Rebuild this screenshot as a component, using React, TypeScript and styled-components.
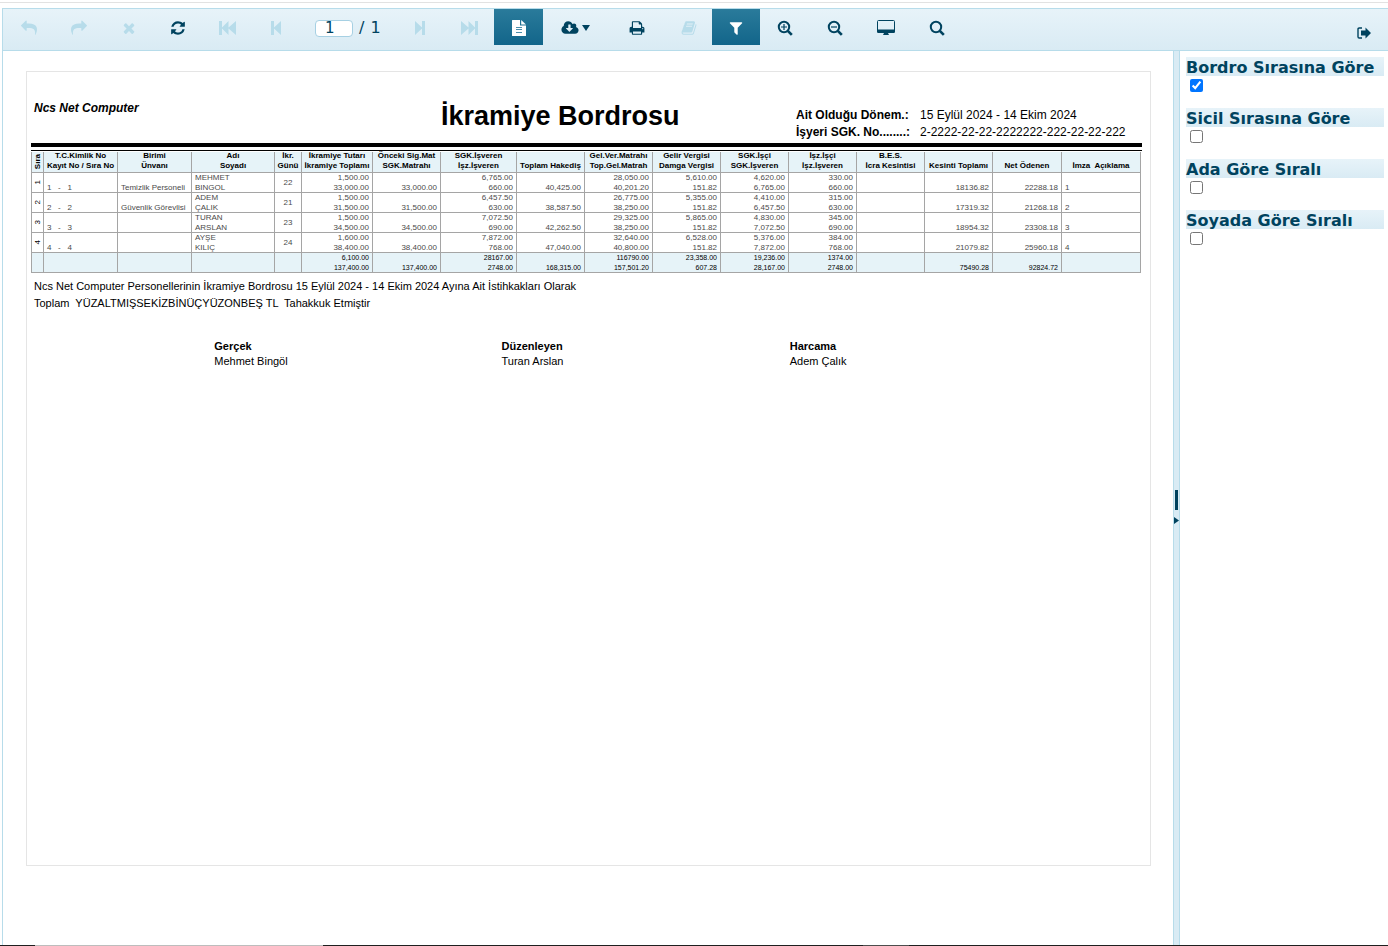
import React from "react";
import styled, { createGlobalStyle } from "styled-components";

const ink = "#00435f";
const edge = "#b7dcea";
const tint = "#e6f3f8";

const GlobalStyle = createGlobalStyle`
  *, *::before, *::after { box-sizing: border-box; }
  body {
    margin: 0;
    background: #fff;
    font-family: "Liberation Sans", Arial, sans-serif;
    color: #000;
  }
`;

const Shell = styled.div`
  display: flex;
  flex-direction: column;
  min-height: 100vh;
  padding-top: 2px;
`;

const TopRule = styled.div`
  height: 1px;
  margin-bottom: 5px;
  background: #e2e2e2;
`;

const Viewer = styled.div`
  flex: 1;
  display: flex;
  flex-direction: column;
  margin-left: 2px;
  border-top: 1px solid ${edge};
  border-left: 1px solid ${edge};
`;

const Toolbar = styled.header`
  display: flex;
  align-items: flex-start;
  height: 42px;
  padding: 0 0 0 1px;
  border-bottom: 1px solid ${edge};
  background: linear-gradient(#e7f3f9, #d9ebf4);
`;

const ToolButton = styled.button<{ $width: number; $active?: boolean }>`
  display: flex;
  align-items: center;
  justify-content: center;
  gap: 3px;
  flex: none;
  width: ${(p) => p.$width}px;
  height: 36px;
  padding: 0;
  border: 0;
  color: ${(p) => (p.$active ? "#fff" : ink)};
  background: ${(p) => (p.$active ? "linear-gradient(#2a7b9b, #12658a)" : "none")};
  &:disabled { color: ${edge}; }
  svg { display: block; margin-top: 2px; }
`;

const PageBox = styled.label`
  display: flex;
  align-items: center;
  flex: none;
  width: 96px;
  height: 38px;
  padding-left: 15px;
  gap: 6px;
  font: 16px/20px "DejaVu Sans", Verdana, sans-serif;
  color: ${ink};
`;

const PageInput = styled.input`
  width: 38px;
  height: 17px;
  padding: 0 0 0 9px;
  border: 1px solid #a6d0e3;
  border-radius: 4px;
  background: #fff;
  font: inherit;
  font-size: 15px;
  line-height: 15px;
  color: ${ink};
`;

const ToolbarEnd = styled.div`
  margin-left: auto;
  padding-top: 5px;
`;

const Body = styled.div`
  flex: 1;
  display: flex;
`;

const PageArea = styled.main`
  flex: 1;
  min-width: 0;
  padding: 20px 22px 20px 23px;
`;

const Sheet = styled.article`
  aspect-ratio: 1125 / 795;
  padding: 0 8px 0 4px;
  border: 1px solid #e5e5e5;
`;

const SheetHead = styled.div`
  display: grid;
  grid-template-columns: 410fr 355fr 346fr;
  height: 71px;
`;

const Company = styled.div`
  padding: 29px 0 0 3px;
  font: italic bold 12px/14px "Liberation Sans", Arial, sans-serif;
`;

const Title = styled.h1`
  margin: 0;
  padding-top: 28px;
  font-size: 27px;
  line-height: 32px;
  white-space: nowrap;
`;

const Facts = styled.dl`
  display: grid;
  grid-template-columns: 124px 1fr;
  align-content: start;
  margin: 0;
  padding-top: 35px;
  font-size: 12px;
  line-height: 17px;
  white-space: nowrap;
  dt { font-weight: bold; }
  dd { margin: 0; }
`;

const DoubleRule = styled.div`
  height: 8px;
  margin-bottom: 1px;
  border-top: 4px solid #000;
  border-bottom: 1px solid #000;
`;

const Payroll = styled.table`
  width: calc(100% - 1px);
  table-layout: fixed;
  border-collapse: separate;
  border-spacing: 0;
  border-left: 1px solid #a5a5a5;
  font-size: 8px;
  line-height: 10px;
  white-space: pre;
  thead, tfoot { background: ${tint}; }
  tfoot { font-size: 7px; }
  tbody { color: #4a4a4a; }
`;

const cell = `
  padding: 0 3px;
  border-right: 1px solid #a5a5a5;
  border-bottom: 1px solid #a5a5a5;
  vertical-align: top;
`;

const HeadCell = styled.th`
  ${cell}
  padding: 0;
`;

const Cell = styled.td<{ $align: Align }>`
  ${cell}
  text-align: ${(p) => p.$align};
`;

const Lines = styled.div<{ $middle?: boolean; $head?: boolean }>`
  display: flex;
  flex-direction: column;
  justify-content: ${(p) => (p.$middle ? "center" : "flex-end")};
  height: ${(p) => (p.$head ? 19 : 20)}px;
  margin-bottom: ${(p) => (p.$head ? 0 : -1)}px;
`;

const Upright = styled.div<{ $head?: boolean }>`
  display: flex;
  align-items: center;
  justify-content: center;
  height: ${(p) => (p.$head ? 20 : 19)}px;
  margin: 0 -3px;
  color: #000;
  span { writing-mode: vertical-rl; transform: rotate(180deg); }
`;

const Note = styled.p`
  margin: 5px 0 27px;
  padding-left: 3px;
  font-size: 11px;
  line-height: 17px;
  white-space: pre;
`;

const Signatures = styled.div`
  display: grid;
  grid-template-columns: 287fr 288fr 352fr;
  padding-left: 16.5%;
  font-size: 11px;
  line-height: 15px;
  strong, span { display: block; }
`;

const Splitter = styled.div`
  display: flex;
  flex-direction: column;
  align-items: center;
  justify-content: center;
  gap: 7px;
  width: 7px;
  padding-top: 18px;
  border: solid ${edge};
  border-width: 0 1px;
  background: #d9ebf4;
`;

const Grip = styled.div`
  width: 3px;
  height: 20px;
  background: ${ink};
`;

const Collapse = styled.button`
  width: 5px;
  height: 7px;
  padding: 0;
  border: 0;
  background: none;
  color: ${ink};
  svg { display: block; }
`;

const Filters = styled.aside`
  display: flex;
  flex-direction: column;
  width: 208px;
  padding: 6px 4px 0 6px;
`;

const Filter = styled.label`
  display: block;
  height: 51px;
  font: bold 16px/21px "DejaVu Sans", Verdana, sans-serif;
  color: ${ink};
  white-space: nowrap;
`;

const FilterName = styled.span`
  display: block;
  height: 19px;
  background: linear-gradient(#e7f3f9, #d9ebf4);
`;

const Tick = styled.input`
  display: block;
  width: 13px;
  height: 13px;
  margin: 3px 4px;
`;

const BottomEdge = styled.div`
  display: flex;
  height: 1px;
  padding-left: 35px;
  overflow: hidden;
  background: #1f1f1f;
`;

const EdgeMark = styled.div<{ $width: number; $tone: string }>`
  flex: none;
  width: ${(p) => p.$width}px;
  margin-right: 540px;
  background: ${(p) => p.$tone};
`;

type Align = "left" | "center" | "right";

const paths = {
  undo: "M1792 1120q0 166-127 451-3 7-10.500 24t-13.500 30-13 22q-12 17-28 17-15 0-23.500-10t-8.500-25q0-9 2.500-26.500t2.500-23.500q5-68 5-123 0-101-17.500-181t-48.500-138.500-80-101-105.500-69.500-133-42.500-154-21.500-175.500-6h-224v256q0 26-19 45t-45 19-45-19l-512-512q-19-19-19-45t19-45l512-512q19-19 45-19t45 19 19 45v256h224q713 0 875 403 53 134 53 333z",
  close: "M1490 1322q0 40-28 68l-136 136q-28 28-68 28t-68-28l-294-294-294 294q-28 28-68 28t-68-28l-136-136q-28-28-28-68t28-68l294-294-294-294q-28-28-28-68t28-68l136-136q28-28 68-28t68 28l294 294 294-294q28-28 68-28t68 28l136 136q28 28 28 68t-28 68l-294 294 294 294q28 28 28 68z",
  refresh: "M1639 1056q0 5-1 7-64 268-268 434.500t-478 166.500q-146 0-282.500-55t-243.500-157l-129 129q-19 19-45 19t-45-19-19-45v-448q0-26 19-45t45-19h448q26 0 45 19t19 45-19 45l-137 137q71 66 161 102t187 36q134 0 250-65t186-179q11-17 53-117 8-23 30-23h192q13 0 22.500 9.500t9.500 22.500zm25-800v448q0 26-19 45t-45 19h-448q-26 0-45-19t-19-45 19-45l138-138q-148-137-349-137-134 0-250 65t-186 179q-11 17-53 117-8 23-30 23h-199q-13 0-22.500-9.500t-9.500-22.500v-7q65-268 270-434.500t480-166.500q146 0 284 55.500t245 156.500l130-129q19-19 45-19t45 19 19 45z",
  cloud: "M1280 928q0-14-9-23t-23-9h-224v-352q0-13-9.500-22.500t-22.500-9.500h-192q-13 0-22.500 9.500t-9.500 22.500v352h-224q-13 0-22.500 9.500t-9.500 22.500q0 14 9 23l352 352q9 9 23 9t23-9l351-351q10-12 10-24zm640 224q0 159-112.500 271.500t-271.500 112.500h-1088q-185 0-316.500-131.500t-131.500-316.500q0-130 70-240t188-165q-2-30-2-43 0-212 150-362t362-150q156 0 285.500 87t188.500 231q71-62 166-62 106 0 181 75t75 181q0 76-41 138 130 31 213.500 135.500t83.500 238.500z",
  print: "M448 1536h896v-256h-896v256zm0-640h896v-384h-160q-40 0-68-28t-28-68v-160h-640v640zm1152 64q0-26-19-45t-45-19-45 19-19 45 19 45 45 19 45-19 19-45zm128 0v416q0 13-9.500 22.500t-22.500 9.500h-224v160q0 40-28 68t-68 28h-960q-40 0-68-28t-28-68v-160h-224q-13 0-22.500-9.500t-9.500-22.500v-416q0-79 56.500-135.500t135.500-56.500h64v-544q0-40 28-68t68-28h672q40 0 88 20t76 48l152 152q28 28 48 76t20 88v256h64q79 0 135.500 56.500t56.500 135.500z",
  book: "M1703 478q40 57 18 129l-275 906q-19 64-76.500 107.500t-122.500 43.500h-923q-77 0-148.500-53.500t-99.500-131.500q-24-67-2-127 0-4 3-27t4-37q1-8-3-21.500t-3-19.500q2-11 8-21t16.500-23.500 16.500-23.500q23-38 45-91.500t30-91.500q3-10 .500-30t-.500-28q3-11 17-28t17-23q21-36 42-92t25-90q1-9-2.500-32t.500-28q4-13 22-30.500t22-22.500q19-26 42.500-84.500t27.500-96.500q1-8-3-25.500t-2-26.500q2-8 9-18t18-23 17-21q8-12 16.500-30.500t15-35 16-36 19.500-32 26.500-23.500 36-11.500 47.500 5.500l-1 3q38-9 51-9h761q74 0 114 56t18 130l-274 906q-36 119-71.500 153.500t-128.500 34.500h-869q-27 0-38 15-11 16-1 43 24 70 144 70h923q29 0 56-15.500t35-41.500l300-987q7-22 5-57 38 15 59 43zm-1064 2q-4 13 2 22.500t20 9.500h608q13 0 25.500-9.500t16.500-22.500l21-64q4-13-2-22.500t-20-9.500h-608q-13 0-25.500 9.500t-16.500 22.500zm-83 256q-4 13 2 22.500t20 9.500h608q13 0 25.500-9.500t16.500-22.500l21-64q4-13-2-22.500t-20-9.500h-608q-13 0-25.500 9.500t-16.500 22.500z",
  filter: "M1595 295q17 41-14 70l-493 493v742q0 42-39 59-13 5-25 5-27 0-45-19l-256-256q-19-19-19-45v-486l-493-493q-31-29-14-70 17-39 59-39h1280q42 0 59 39z",
};

function Glyph({ d, box = "0 0 1792 1792", w = 16, h = 16, flip = false }: { d: string; box?: string; w?: number; h?: number; flip?: boolean }) {
  return (
    <svg width={w} height={h} viewBox={box} fill="currentColor" aria-hidden="true">
      <path d={d} transform={flip ? "translate(1792 0) scale(-1 1)" : undefined} />
    </svg>
  );
}

const FirstIcon = () => <Glyph w={17} h={14} box="0 0 17 14" d="M0 0H3V6.500L9.500 0V6.500L17 0V14L9.500 7.500V14L3 7.500V14H0Z" />;
const PrevIcon = () => <Glyph w={10} h={14} box="0 0 10 14" d="M0 0H3V6.500L10 0V14L3 7.500V14H0Z" />;
const NextIcon = () => <Glyph w={10} h={14} box="0 0 10 14" d="M10 0H7V6.500L0 0V14L7 7.500V14H10Z" />;
const LastIcon = () => <Glyph w={17} h={14} box="0 0 17 14" d="M17 0H14V6.500L7.500 0V6.500L0 0V14L7.500 7.500V14L14 7.500V14H17Z" />;
const SheetIcon = () => (
  <svg width="14" height="16" viewBox="0 0 14 16" fill="#fff" aria-hidden="true">
    <path d="M0 0.500Q0 0 .5 0H8V5.500H14V15.500Q14 16 13.500 16H.5Q0 16 0 15.500Z" />
    <path d="M9.200 0L14 4.500H9.200Z" />
    <path d="M4 7.500H10M4 9.500H10M4 12.500H10" stroke="#4b8eab" />
  </svg>
);
const ScreenIcon = () => (
  <svg width="18" height="16" viewBox="0 0 18 16" aria-hidden="true">
    <rect x=".5" y=".5" width="17" height="11.500" rx="1" fill="none" stroke={ink} />
    <path d="M0 9.500H18V11.500Q18 13 16.800 13H11L12 15H6L7 13H1.200Q0 13 0 11.500Z" fill={ink} />
  </svg>
);
const Lens = ({ inside }: { inside?: string }) => (
  <svg width="16" height="16" viewBox="0 0 16 16" fill="none" stroke="currentColor" aria-hidden="true">
    <circle cx="7" cy="7" r="5.200" strokeWidth="2" />
    <path d="M10.800 10.800L14.800 14.800" strokeWidth="2.600" />
    {inside && <path d={inside} strokeWidth="1.200" />}
  </svg>
);
const ExitIcon = () => (
  <svg width="14" height="12" viewBox="0 0 14 12" aria-hidden="true">
    <path d="M5 1H2.200Q1 1 1 2.200V9.800Q1 11 2.200 11H5" fill="none" stroke={ink} strokeWidth="1.400" />
    <path d="M4 3.500H8.500V.5L14 6L8.500 11.500V8.500H4Z" fill={ink} />
  </svg>
);

const widths = [12, 74, 74, 83, 27, 71, 68, 76, 68, 68, 68, 68, 68, 68, 68, 69, 79];

const heads: string[][] = [
  ["T.C.Kimlik No", "Kayıt No / Sıra No"],
  ["Birimi", "Ünvanı"],
  ["Adı", "Soyadı"],
  ["İkr.", "Günü"],
  ["İkramiye Tutarı", "İkramiye Toplamı"],
  ["Önceki Sig.Mat", "SGK.Matrahı"],
  ["SGK.İşveren", "İşz.İşveren"],
  ["Toplam Hakediş"],
  ["Gel.Ver.Matrahı", "Top.Gel.Matrah"],
  ["Gelir Vergisi", "Damga Vergisi"],
  ["SGK.İşçi", "SGK.İşveren"],
  ["İşz.İşçi", "İşz.İşveren"],
  ["B.E.S.", "İcra Kesintisi"],
  ["Kesinti Toplamı"],
  ["Net Ödenen"],
  ["İmza  Açıklama"],
];

const aligns: Align[] = ["left", "left", "left", "center", "right", "right", "right", "right", "right", "right", "right", "right", "right", "right", "right", "left"];

const rows: string[][][] = [
  [["1   -   1"], ["Temizlik Personeli"], ["MEHMET", "BINGOL"], ["22"], ["1,500.00", "33,000.00"], ["33,000.00"], ["6,765.00", "660.00"], ["40,425.00"], ["28,050.00", "40,201.20"], ["5,610.00", "151.82"], ["4,620.00", "6,765.00"], ["330.00", "660.00"], [], ["18136.82"], ["22288.18"], ["1"]],
  [["2   -   2"], ["Güvenlik Görevlisi"], ["ADEM", "ÇALIK"], ["21"], ["1,500.00", "31,500.00"], ["31,500.00"], ["6,457.50", "630.00"], ["38,587.50"], ["26,775.00", "38,250.00"], ["5,355.00", "151.82"], ["4,410.00", "6,457.50"], ["315.00", "630.00"], [], ["17319.32"], ["21268.18"], ["2"]],
  [["3   -   3"], [], ["TURAN", "ARSLAN"], ["23"], ["1,500.00", "34,500.00"], ["34,500.00"], ["7,072.50", "690.00"], ["42,262.50"], ["29,325.00", "38,250.00"], ["5,865.00", "151.82"], ["4,830.00", "7,072.50"], ["345.00", "690.00"], [], ["18954.32"], ["23308.18"], ["3"]],
  [["4   -   4"], [], ["AYŞE", "KILIÇ"], ["24"], ["1,600.00", "38,400.00"], ["38,400.00"], ["7,872.00", "768.00"], ["47,040.00"], ["32,640.00", "40,800.00"], ["6,528.00", "151.82"], ["5,376.00", "7,872.00"], ["384.00", "768.00"], [], ["21079.82"], ["25960.18"], ["4"]],
];

const totals: string[][] = [[], [], [], [], ["6,100.00", "137,400.00"], ["137,400.00"], ["28167.00", "2748.00"], ["168,315.00"], ["116790.00", "157,501.20"], ["23,358.00", "607.28"], ["19,236.00", "28,167.00"], ["1374.00", "2748.00"], [], ["75490.28"], ["92824.72"], []];

function Values({ cells }: { cells: string[][] }) {
  return (
    <>
      {cells.map((lines, i) => (
        <Cell key={i} $align={aligns[i]}>
          <Lines $middle={i === 3}>
            {lines.map((t, j) => <span key={j}>{t}</span>)}
          </Lines>
        </Cell>
      ))}
    </>
  );
}

const signers = [["Gerçek", "Mehmet Bingöl"], ["Düzenleyen", "Turan Arslan"], ["Harcama", "Adem Çalık"]];
const filters = ["Bordro Sırasına Göre", "Sicil Sırasına Göre", "Ada Göre Sıralı", "Soyada Göre Sıralı"];

export default function App() {
  return (
    <Shell>
      <GlobalStyle />
      <TopRule />
      <Viewer>
        <Toolbar>
          <ToolButton $width={50} disabled aria-label="Geri"><Glyph d={paths.undo} /></ToolButton>
          <ToolButton $width={50} disabled aria-label="İleri"><Glyph d={paths.undo} flip /></ToolButton>
          <ToolButton $width={50} disabled aria-label="Durdur"><Glyph d={paths.close} /></ToolButton>
          <ToolButton $width={48} aria-label="Yenile"><Glyph d={paths.refresh} /></ToolButton>
          <ToolButton $width={50} disabled aria-label="İlk sayfa"><FirstIcon /></ToolButton>
          <ToolButton $width={48} disabled aria-label="Önceki sayfa"><PrevIcon /></ToolButton>
          <PageBox><PageInput defaultValue="1" aria-label="Sayfa" /><span>/</span><span>1</span></PageBox>
          <ToolButton $width={48} disabled aria-label="Sonraki sayfa"><NextIcon /></ToolButton>
          <ToolButton $width={50} disabled aria-label="Son sayfa"><LastIcon /></ToolButton>
          <ToolButton $width={49} $active aria-label="Baskı önizleme"><SheetIcon /></ToolButton>
          <ToolButton $width={65} aria-label="Dışa aktar">
            <Glyph d={paths.cloud} box="0 0 1920 1792" w={18} />
            <Glyph d="M0 0H8L4 6Z" box="0 0 8 6" w={8} h={6} />
          </ToolButton>
          <ToolButton $width={58} aria-label="Yazdır"><Glyph d={paths.print} /></ToolButton>
          <ToolButton $width={46} disabled aria-label="Belge haritası"><Glyph d={paths.book} /></ToolButton>
          <ToolButton $width={48} $active aria-label="Filtre"><Glyph d={paths.filter} /></ToolButton>
          <ToolButton $width={50} aria-label="Yakınlaştır"><Lens inside="M7 4V10M4 7H10" /></ToolButton>
          <ToolButton $width={50} aria-label="Uzaklaştır"><Lens inside="M4 7H10" /></ToolButton>
          <ToolButton $width={52} aria-label="Tam sayfa"><ScreenIcon /></ToolButton>
          <ToolButton $width={50} aria-label="Ara"><Lens /></ToolButton>
          <ToolbarEnd>
            <ToolButton $width={48} aria-label="Çıkış"><ExitIcon /></ToolButton>
          </ToolbarEnd>
        </Toolbar>
        <Body>
          <PageArea>
            <Sheet>
              <SheetHead>
                <Company>Ncs Net Computer</Company>
                <Title>İkramiye Bordrosu</Title>
                <Facts>
                  <dt>Ait Olduğu Dönem.:</dt>
                  <dd>15 Eylül 2024 - 14 Ekim 2024</dd>
                  <dt>İşyeri SGK. No........:</dt>
                  <dd>2-2222-22-22-2222222-222-22-22-222</dd>
                </Facts>
              </SheetHead>
              <DoubleRule />
              <Payroll>
                <colgroup>
                  {widths.map((w, i) => <col key={i} style={{ width: w }} />)}
                </colgroup>
                <thead>
                  <tr>
                    <HeadCell><Upright $head><span>Sıra</span></Upright></HeadCell>
                    {heads.map((lines, i) => (
                      <HeadCell key={i}>
                        <Lines $head>
                          {lines.map((t, j) => <span key={j}>{t}</span>)}
                        </Lines>
                      </HeadCell>
                    ))}
                  </tr>
                </thead>
                <tbody>
                  {rows.map((r, i) => (
                    <tr key={i}>
                      <Cell $align="center"><Upright><span>{i + 1}</span></Upright></Cell>
                      <Values cells={r} />
                    </tr>
                  ))}
                </tbody>
                <tfoot>
                  <tr>
                    <Cell $align="center" />
                    <Values cells={totals} />
                  </tr>
                </tfoot>
              </Payroll>
              <Note>
                {"Ncs Net Computer Personellerinin İkramiye Bordrosu 15 Eylül 2024 - 14 Ekim 2024 Ayına Ait İstihkakları Olarak\nToplam  YÜZALTMIŞSEKİZBİNÜÇYÜZONBEŞ TL  Tahakkuk Etmiştir"}
              </Note>
              <Signatures>
                {signers.map(([role, name]) => (
                  <div key={role}><strong>{role}</strong><span>{name}</span></div>
                ))}
              </Signatures>
            </Sheet>
          </PageArea>
          <Splitter>
            <Grip />
            <Collapse aria-label="Paneli kapat"><Glyph d="M0 0L5 3.500L0 7Z" box="0 0 5 7" w={5} h={7} /></Collapse>
          </Splitter>
          <Filters>
            {filters.map((name, i) => (
              <Filter key={name}>
                <FilterName>{name}</FilterName>
                <Tick type="checkbox" defaultChecked={i === 0} />
              </Filter>
            ))}
          </Filters>
        </Body>
      </Viewer>
      <BottomEdge>
        <EdgeMark $width={288} $tone="#bdbdbd" />
        <EdgeMark $width={46} $tone="#4d4d4d" />
      </BottomEdge>
    </Shell>
  );
}
